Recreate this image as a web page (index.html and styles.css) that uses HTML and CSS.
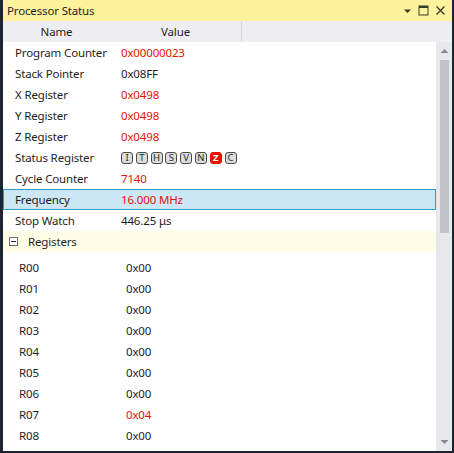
FILE: index.html
```html
<!DOCTYPE html>
<html>
<head>
<meta charset="utf-8">
<link rel="stylesheet" href="styles.css">
</head>
<body>
<div class="window">
  <div class="titlebar">
    <span class="title">Processor Status</span>
    <span class="tb-icons">
      <svg width="9" height="6" viewBox="0 0 9 6" class="ico"><path d="M1 1.5 L8 1.5 L4.5 5 Z" fill="#3a3a2a"/></svg>
      <svg width="11" height="11" viewBox="0 0 11 11" class="ico"><rect x="1" y="1" width="9" height="9" fill="none" stroke="#3a3a2a" stroke-width="1"/><rect x="1" y="1" width="9" height="2" fill="#3a3a2a"/></svg>
      <svg width="11" height="11" viewBox="0 0 11 11" class="ico"><path d="M1.5 1.5 L9.5 9.5 M9.5 1.5 L1.5 9.5" stroke="#3a3a2a" stroke-width="1.3"/></svg>
    </span>
  </div>
  <div class="header">
    <div class="hcell c1">Name</div>
    <div class="hcell c2">Value</div>
    <div class="hrest"></div>
  </div>
  <div class="content">
    <div class="grid">
      <div class="row"><span class="k">Program Counter</span><span class="v red">0x00000023</span></div>
      <div class="row"><span class="k">Stack Pointer</span><span class="v">0x08FF</span></div>
      <div class="row"><span class="k">X Register</span><span class="v red">0x0498</span></div>
      <div class="row"><span class="k">Y Register</span><span class="v red">0x0498</span></div>
      <div class="row"><span class="k">Z Register</span><span class="v red">0x0498</span></div>
      <div class="row"><span class="k">Status Register</span><span class="v flags"><span class="flag">I</span><span class="flag">T</span><span class="flag">H</span><span class="flag">S</span><span class="flag">V</span><span class="flag">N</span><span class="flag on">Z</span><span class="flag">C</span></span></div>
      <div class="row"><span class="k">Cycle Counter</span><span class="v red">7140</span></div>
      <div class="row sel"><span class="k">Frequency</span><span class="v red">16.000 MHz</span></div>
      <div class="row"><span class="k">Stop Watch</span><span class="v">446.25 μs</span></div>
      <div class="group"><span class="minus"></span><span class="gname">Registers</span></div>
      <div class="regs">
        <div class="row reg"><span class="k">R00</span><span class="v">0x00</span></div>
        <div class="row reg"><span class="k">R01</span><span class="v">0x00</span></div>
        <div class="row reg"><span class="k">R02</span><span class="v">0x00</span></div>
        <div class="row reg"><span class="k">R03</span><span class="v">0x00</span></div>
        <div class="row reg"><span class="k">R04</span><span class="v">0x00</span></div>
        <div class="row reg"><span class="k">R05</span><span class="v">0x00</span></div>
        <div class="row reg"><span class="k">R06</span><span class="v">0x00</span></div>
        <div class="row reg"><span class="k">R07</span><span class="v red">0x04</span></div>
        <div class="row reg"><span class="k">R08</span><span class="v">0x00</span></div>
      </div>
    </div>
    <div class="scrollbar">
      <svg width="9" height="6" viewBox="0 0 9 6" class="arrow"><path d="M0.5 5 L8.5 5 L4.5 1 Z" fill="#868999"/></svg>
      <div class="track"><div class="thumb"></div></div>
      <svg width="9" height="6" viewBox="0 0 9 6" class="arrow"><path d="M0.5 1 L8.5 1 L4.5 5 Z" fill="#868999"/></svg>
    </div>
  </div>
</div>
</body>
</html>
```
FILE: styles.css
```css
html, body {
  margin: 0;
  padding: 0;
}
body {
  background: #1d2533;
  width: 454px;
  height: 453px;
  overflow: hidden;
  font-family: "Noto Sans", "Open Sans", sans-serif;
  font-size: 11.5px;
  letter-spacing: -0.15px;
  color: #1e1e1e;
}
.window {
  margin-left: 3px;
  width: 449px;
  height: 451px;
  background: #ffffff;
  display: flex;
  flex-direction: column;
  overflow: hidden;
}
.titlebar {
  height: 21px;
  flex: none;
  background: #fff29d;
  display: flex;
  align-items: center;
  padding-left: 4px;
  padding-right: 6px;
  font-size: 11.5px;
}
.title { flex: 1; }
.tb-icons {
  display: flex;
  align-items: center;
  gap: 6px;
}
.ico { display: block; }
.header {
  height: 21px;
  flex: none;
  background: #eeeef2;
  display: flex;
  align-items: stretch;
}
.hcell {
  display: flex;
  align-items: center;
  justify-content: center;
}
.c1 { width: 107px; }
.c2 { width: 131px; border-right: 1px solid #d6d6da; }
.hrest { flex: 1; }
.content {
  flex: 1;
  display: flex;
  min-height: 0;
}
.grid {
  flex: 1;
  display: flex;
  flex-direction: column;
}
.row {
  height: 21px;
  flex: none;
  display: flex;
  align-items: center;
  box-sizing: border-box;
}
.row .k {
  width: 118px;
  padding-left: 12px;
  box-sizing: border-box;
  flex: none;
}
.row .v { flex: 1; }
.red { color: #e51400; }
.sel {
  background: #cce8f6;
  border: 1px solid #3399cc;
}
.sel .k { padding-left: 11px; width: 117px; }
.flags {
  display: flex;
  gap: 2.8px;
}
.flag {
  width: 10px;
  height: 10px;
  border: 1px solid #4a4a4a;
  border-radius: 3px;
  background: #dcdcdc;
  font-size: 9.5px;
  line-height: 10px;
  letter-spacing: 0;
  text-align: center;
  color: #2a2a2a;
}
.flag.on {
  background: #e51400;
  border-color: #e51400;
  color: #ffffff;
  font-weight: bold;
}
.group {
  height: 21px;
  flex: none;
  background: #fffde6;
  display: flex;
  align-items: center;
}
.minus {
  width: 7px;
  height: 7px;
  border: 1px solid #717171;
  margin-left: 6px;
  margin-right: 10px;
  position: relative;
  background: #fff;
}
.minus::after {
  content: "";
  position: absolute;
  left: 1px;
  right: 1px;
  top: 3px;
  height: 1px;
  background: #333;
}
.regs {
  padding-top: 5px;
}
.reg .k {
  padding-left: 16px;
  width: 123px;
}
.scrollbar {
  width: 16px;
  flex: none;
  background: #e8e8ec;
  display: flex;
  flex-direction: column;
  align-items: center;
}
.arrow {
  display: block;
  margin: 6px 0;
}
.track {
  flex: 1;
  width: 100%;
  display: flex;
  justify-content: center;
}
.thumb {
  width: 9px;
  height: 173px;
  background: #c2c3c9;
}
```
